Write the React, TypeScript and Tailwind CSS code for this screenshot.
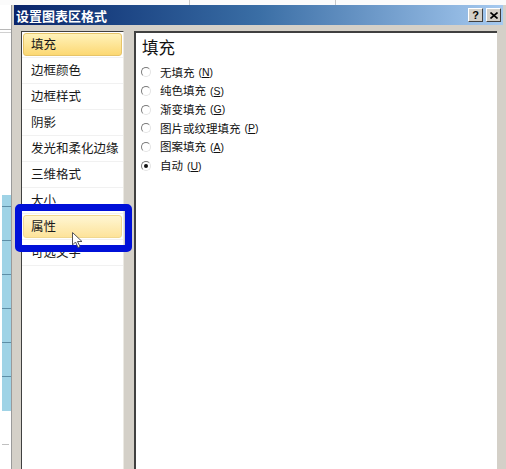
import React from "react";

const cjk = { fontFamily: '"Noto Sans CJK SC", "Noto Sans", sans-serif' };

const listItems = ["填充", "边框颜色", "边框样式", "阴影", "发光和柔化边缘", "三维格式", "大小", "属性", "可选文字"];

const radios: { label: string; key: string; checked?: boolean }[] = [
  { label: "无填充", key: "N" },
  { label: "纯色填充", key: "S" },
  { label: "渐变填充", key: "G" },
  { label: "图片或纹理填充", key: "P" },
  { label: "图案填充", key: "A" },
  { label: "自动", key: "U", checked: true },
];

function Radio({ checked }: { checked?: boolean }) {
  return (
    <span className="w-[10px] h-[10px] rounded-full border border-t-[#7a7a7a] border-l-[#7a7a7a] border-r-[#e4e4e4] border-b-[#e4e4e4] bg-white flex items-center justify-center shrink-0">
      {checked && <span className="w-[4px] h-[4px] rounded-full bg-[#111]" />}
    </span>
  );
}

export default function App() {
  return (
    <div className="w-[506px] h-[469px] overflow-hidden relative bg-white flex flex-col" style={cjk}>
      {/* spreadsheet behind, top strip */}
      <div className="h-[5px] flex shrink-0 bg-[#fbfbfb]">
        <div className="w-[190px] border-r border-[#c8c8c8]" />
        <div className="w-[146px] border-r border-[#c8c8c8]" />
      </div>
      <div className="flex flex-1 min-h-0">
        {/* spreadsheet behind, left strip */}
        <div className="w-[12px] shrink-0 bg-white flex flex-col border-r border-[#9a9a9a]">
          <div className="h-[25px] border-b border-[#b8b8b8]" />
          <div className="h-[3px] border-b border-[#d0d0d0]" />
          <div className="h-[162px]" />
          <div className="h-[216px] ml-[2px] bg-[#9fd3e6] flex flex-col">
            <div className="h-[12px] border-b border-[#5d8ea6]" />
            <div className="h-[34px] border-b border-[#5d8ea6]" />
            <div className="h-[34px] border-b border-[#5d8ea6]" />
            <div className="h-[34px] border-b border-[#5d8ea6]" />
            <div className="h-[34px] border-b border-[#5d8ea6]" />
            <div className="h-[34px] border-b border-[#5d8ea6]" />
          </div>
          <div className="h-[33px]" />
          <div className="h-[1px] bg-[#c0c0c0] mx-[2px]" />
        </div>
        {/* dialog */}
        <div className="flex-1 bg-[#d4d0c8] flex flex-col pl-[2px] pr-[3px] min-w-0">
          <div className="h-[20px] shrink-0 bg-gradient-to-r from-[#0a246a] via-[#3a6ea5] to-[#a6caf0] flex items-center pl-[2px] pr-[2px]">
            <span className="text-white font-bold text-[13px] leading-none">设置图表区格式</span>
            <div className="ml-auto flex gap-[3px]">
              <div className="w-[15px] h-[14px] bg-[#d4d0c8] border border-t-white border-l-white border-r-[#404040] border-b-[#404040] flex items-center justify-center text-[11px] font-bold leading-none text-black" style={{ fontFamily: '"Liberation Sans", sans-serif' }}>?</div>
              <div className="w-[15px] h-[14px] bg-[#d4d0c8] border border-t-white border-l-white border-r-[#404040] border-b-[#404040] flex items-center justify-center text-black">
                <svg width="8" height="7" viewBox="0 0 8 7">
                  <path d="M0.5 0.5 L7.5 6.5 M7.5 0.5 L0.5 6.5" stroke="#000" strokeWidth="1.6" />
                </svg>
              </div>
            </div>
          </div>
          <div className="flex-1 min-h-0 overflow-hidden flex pt-[6px] pl-[7px] gap-[10px]">
            {/* left list */}
            <div className="w-[103px] h-[500px] shrink-0 bg-white border-l-[1px] border-t-[1px] border-r-[1px] border-l-[#404040] border-t-[#404040] border-r-[#ebe9e3] flex flex-col">
              {listItems.map((t, i) => (
                <div key={t} className="h-[26px] p-[1px] border-b border-[#f1f1f1]">
                  <div
                    className={
                      "h-full flex items-center pl-[7px] text-[12.5px] text-[#1a1a1a] rounded-[3px] " +
                      (i === 0
                        ? "bg-gradient-to-b from-[#fff2b8] to-[#fcd872] border border-[#e6c46a]"
                        : i === 7
                        ? "bg-gradient-to-b from-[#fff6d2] to-[#fde39a] border border-[#f0d890]"
                        : "border border-transparent")
                    }
                  >
                    {t}
                  </div>
                </div>
              ))}
            </div>
            {/* right panel */}
            <div className="w-[363px] h-[500px] shrink-0 bg-white border-l-2 border-t-2 border-[#404040] flex flex-col pt-[4px]">
              <div className="pl-[6px] text-[16.5px] leading-[20px] text-[#111]">填充</div>
              <div className="mt-[6px] flex flex-col">
                {radios.map((r) => (
                  <div key={r.key} className="h-[18.7px] flex items-center pl-[5px] gap-[9px]">
                    <Radio checked={r.checked} />
                    <span className="text-[11.5px] leading-none text-[#111] flex items-center">
                      {r.label}
                      <span className="ml-[4px] text-[10.5px]" style={{ fontFamily: '"Liberation Sans", sans-serif' }}>
                        (<span className="underline">{r.key}</span>)
                      </span>
                    </span>
                  </div>
                ))}
              </div>
            </div>
          </div>
        </div>
      </div>

      {/* annotation box */}
      <div className="absolute left-[15px] top-[204px] w-[117px] h-[48px] border-[7px] border-[#0010d8] rounded-[5px]" />
      {/* mouse cursor */}
      <svg className="absolute left-[72px] top-[232px]" width="13" height="17" viewBox="0 0 13 17">
        <path d="M0.5 0.5 L0.5 13 L3.5 10 L6 15.5 L8 14.5 L5.5 9.5 L10 9.5 Z" fill="#fff" stroke="#555" strokeWidth="1" strokeLinejoin="round" />
      </svg>
    </div>
  );
}
